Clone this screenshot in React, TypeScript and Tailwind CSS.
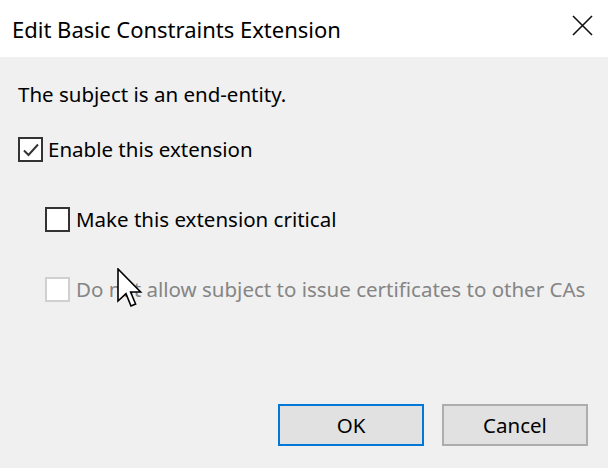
import React from "react";

const font = { fontFamily: '"Noto Sans", "Open Sans", sans-serif' };

function Check({ checked, disabled, size }: { checked?: boolean; disabled?: boolean; size: number }) {
  return (
    <div
      className={
        "shrink-0 bg-white border-2 flex items-center justify-center " +
        (disabled ? "border-[#d0d0d0]" : "border-[#333333]")
      }
      style={{ width: size, height: size }}
    >
      {checked && (
        <svg width="18" height="16" viewBox="0 0 18 16">
          <path d="M2 8.5 L6.5 13 L16 2.5" fill="none" stroke="#333" strokeWidth="2" />
        </svg>
      )}
    </div>
  );
}

export default function App() {
  return (
    <div className="w-[608px] h-[468px] bg-[#f0f0f0] flex flex-col text-[#000]" style={font}>
      <div className="h-[57px] bg-white flex items-center justify-between pl-[12px] pr-[15px] shrink-0">
        <span className="text-[22px] leading-none text-[#000]">Edit Basic Constraints Extension</span>
        <svg width="21" height="21" viewBox="0 0 21 21" className="-mt-[6px]">
          <path d="M1 1 L20 20 M20 1 L1 20" stroke="#111" strokeWidth="1.6" fill="none" />
        </svg>
      </div>
      <div className="relative flex-1 flex flex-col pl-[18px]">
        <div className="mt-[23px] text-[20.5px] leading-[28px]">The subject is an end-entity.</div>
        <div className="mt-[29px] flex items-center gap-[5px]">
          <Check checked size={25} />
          <span className="text-[20.5px] leading-[25px]">Enable this extension</span>
        </div>
        <div className="mt-[45px] ml-[27px] flex items-center gap-[6px]">
          <Check size={25} />
          <span className="text-[20.5px] leading-[25px]">Make this extension critical</span>
        </div>
        <div className="mt-[45px] ml-[27px] flex items-center gap-[6px]">
          <Check disabled size={25} />
          <span className="text-[20.5px] leading-[25px] text-[#858585]">
            Do not allow subject to issue certificates to other CAs
          </span>
        </div>
        <div className="mt-auto mb-[22px] flex justify-end gap-[18px] pr-[20px]">
          <button className="w-[146px] h-[42px] bg-[#e1e1e1] border-2 border-[#0078d7] text-[20.5px] text-[#000]">
            OK
          </button>
          <button className="w-[146px] h-[42px] bg-[#e1e1e1] border-2 border-[#adadad] text-[20.5px] text-[#000]">
            Cancel
          </button>
        </div>
        <svg
          className="absolute left-[117px] top-[211px]"
          width="26"
          height="40"
          viewBox="0 0 13 20"
        >
          <path
            d="M0.5 0.5 L0.5 16.5 L4.5 12.8 L7 19 L9.3 18 L6.8 12 L11.8 12 Z"
            fill="#fff"
            stroke="#000"
            strokeWidth="0.8"
            strokeLinejoin="miter"
          />
        </svg>
      </div>
    </div>
  );
}
